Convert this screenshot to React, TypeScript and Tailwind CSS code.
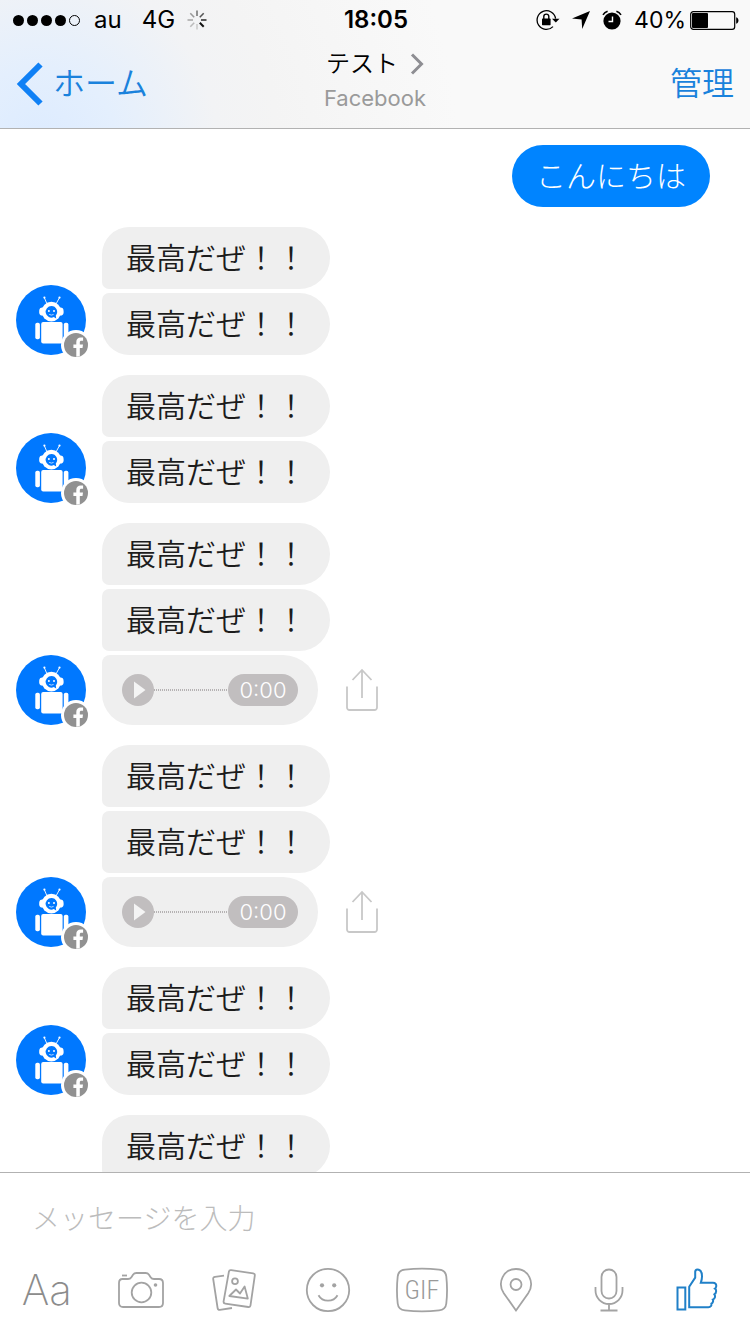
import React from 'react';

type Message = { id: number; kind: 'text'; body: string } | { id: number; kind: 'audio'; duration: string };

const text = (id: number): Message => ({ id, kind: 'text', body: '最高だぜ！！' });
const audio = (id: number): Message => ({ id, kind: 'audio', duration: '0:00' });

const groups: Message[][] = [
  [text(1), text(2)],
  [text(3), text(4)],
  [text(5), text(6), audio(7)],
  [text(8), text(9), audio(10)],
  [text(11), text(12)],
  [text(13), text(14)],
];

const SpinnerIcon = () => (
  <svg width="20" height="20" viewBox="0 0 20 20" strokeWidth="1.6" aria-hidden="true">
    <path d="M10 0.5V6" stroke="#777" />
    <path d="M16.7 3.3L12.8 7.2" stroke="#555" />
    <path d="M19.5 10H14" stroke="#333" />
    <path d="M16.7 16.7L12.8 12.8" stroke="#111" strokeWidth="2" />
    <path d="M10 19.5V14" stroke="#ccc" />
    <path d="M3.3 16.7L7.2 12.8" stroke="#bbb" />
    <path d="M0.5 10H6" stroke="#aaa" />
    <path d="M3.3 3.3L7.2 7.2" stroke="#999" />
  </svg>
);

const RotationLockIcon = () => (
  <svg width="24" height="22" viewBox="0 0 24 22" aria-hidden="true">
    <path d="M19.6 9.6A9.3 9.3 0 1 0 17 17.6" fill="none" stroke="#000" strokeWidth="1.3" />
    <path d="M16 9.8H23.5L19.8 13.6Z" />
    <rect x="6" y="9.6" width="8.6" height="6.6" rx="0.6" />
    <path d="M7.8 10V7.6a2.5 2.5 0 0 1 5 0V10" fill="none" stroke="#000" strokeWidth="1.4" />
  </svg>
);

const LocationIcon = () => (
  <svg width="18" height="18" viewBox="0 0 18 18" aria-hidden="true">
    <path d="M18 0L10.2 18L9.6 8.4L0 7.6Z" />
  </svg>
);

const AlarmIcon = () => (
  <svg width="20" height="20" viewBox="0 0 20 20" aria-hidden="true">
    <circle cx="10" cy="11" r="8.6" />
    <path d="M10.5 6.5V11.5H6.5" fill="none" stroke="#fff" strokeWidth="1.4" />
    <path d="M1 4.8Q2.6 2.2 5.6 1.2M19 4.8Q17.4 2.2 14.4 1.2" fill="none" stroke="#000" strokeWidth="1.6" />
  </svg>
);

const BatteryIcon = () => (
  <svg width="49" height="19" viewBox="0 0 49 19" aria-hidden="true">
    <rect x="0.7" y="0.7" width="44" height="17.6" rx="2.6" fill="none" stroke="#000" strokeWidth="1.2" />
    <rect x="2" y="2" width="16" height="15" rx="1" />
    <path d="M46.2 6.2c3 0.6 3 6 0 6.6Z" />
  </svg>
);

const Avatar = () => (
  <svg className="shrink-0 overflow-visible" width="70" height="70" viewBox="0 0 70 70" role="img" aria-label="Bot">
    <circle cx="35" cy="35" r="35" fill="#0078ff" />
    <g fill="#fff">
      <path d="M31 19L28.4 12.8M40 19L43.4 12.8" stroke="#fff" strokeWidth="0.9" />
      <circle cx="28.4" cy="12.6" r="1.1" />
      <circle cx="43.5" cy="12.6" r="1.1" />
      <circle cx="35.4" cy="26.6" r="9.8" />
      <rect x="23.2" y="22.6" width="24.4" height="8" rx="3.4" />
      <rect x="19.3" y="37.7" width="4.6" height="16.6" rx="1.8" />
      <rect x="25.2" y="37" width="21.4" height="21.4" rx="2" />
      <rect x="47.8" y="37.7" width="4.6" height="16.6" rx="1.8" />
    </g>
    <path d="M35.4 21a5.8 5.8 0 1 0 2.4 11.1l2.4 1.4-.4-3A5.8 5.8 0 0 0 35.4 21Z" fill="#0078ff" />
    <circle cx="32.9" cy="26" r="1" fill="#fff" />
    <circle cx="38" cy="26" r="1" fill="#fff" />
    <path d="M33.2 29.4Q35.4 30.8 37.6 29.4" fill="none" stroke="#fff" strokeWidth="0.7" />
    <circle cx="60" cy="60" r="15" fill="#fff" />
    <circle cx="60" cy="60" r="12" fill="#919191" />
    <path d="M60.3 71.8V63H57.4V59.4H60.3V57c0-3 1.8-4.6 4.4-4.6h2.4v3.3h-1.6c-1.3 0-1.7.6-1.7 1.7v2H67l-.5 3.6h-2.7v8.3Z" fill="#fff" />
  </svg>
);

const ShareIcon = () => (
  <svg width="34" height="44" viewBox="0 0 34 44" fill="none" stroke="#c8c8c8" strokeWidth="1.8" aria-hidden="true">
    <path d="M2 18.5V39.5a2.5 2.5 0 0 0 2.5 2.5h25a2.5 2.5 0 0 0 2.5-2.5V18.5" />
    <path d="M17 30V2M7.5 12L17 2L26.5 12" />
  </svg>
);

const toolIcon = { fill: 'none', stroke: '#a3a3a3', strokeWidth: 1.8, 'aria-hidden': true } as const;

const CameraIcon = () => (
  <svg width="48" height="38" viewBox="0 0 48 38" {...toolIcon}>
    <path d="M5.5 8H11c1.6 0 2.6-.6 3.4-1.8l1.6-2.5C16.9 2.4 18 2 19.4 2h9.2c1.4 0 2.5.4 3.4 1.7l1.6 2.5C34.4 7.4 35.4 8 37 8h5c2.6 0 4 1.6 4 4v20c0 2.6-1.6 4-4 4H6c-2.6 0-4-1.4-4-4V12c0-2.6 1.2-4 3.5-4Z" />
    <path d="M5 4.5h5" />
    <circle cx="24.5" cy="21.5" r="9.8" />
    <circle cx="38.5" cy="14" r="1.8" fill="#a3a3a3" stroke="none" />
  </svg>
);

const PhotosIcon = () => (
  <svg width="46" height="44" viewBox="0 0 46 44" strokeLinejoin="round" {...toolIcon}>
    <path d="M13 7.6L4 8.8c-1.3.2-2 1-1.8 2.2L6.6 40c.2 1.3 1 2 2.2 1.8L21 40" />
    <path d="M20.2 2.2L42.2 5.4c1.2.2 1.8 1 1.6 2.2L39.5 37.4c-.2 1.2-1 1.8-2.2 1.6L14.2 35.6c-1.2-.2-1.8-1-1.6-2.2L17.9 3.7c.2-1.1 1.1-1.7 2.3-1.5Z" />
    <circle cx="24" cy="13.3" r="2.9" />
    <path d="M18.3 28L25 21.5L29 25.5L33.6 18.5L36.8 30.6Z" />
  </svg>
);

const SmileIcon = () => (
  <svg width="46" height="46" viewBox="0 0 46 46" {...toolIcon}>
    <circle cx="23" cy="23" r="21.2" />
    <circle cx="17" cy="18.3" r="2.1" fill="#a3a3a3" stroke="none" />
    <circle cx="29.2" cy="18.3" r="2.1" fill="#a3a3a3" stroke="none" />
    <path d="M13.5 28.2C17.5 35.5 28.5 35.5 32.5 28.2" />
  </svg>
);

const GifIcon = () => (
  <svg width="54" height="46" viewBox="0 0 54 46" {...toolIcon}>
    <path d="M10 2.6Q27 .8 44 2.6Q50.6 3.2 51.3 9.5Q52.8 23 51.3 36.5Q50.6 42.8 44 43.4Q27 45.2 10 43.4Q3.4 42.8 2.7 36.5Q1.2 23 2.7 9.5Q3.4 3.2 10 2.6Z" />
  </svg>
);

const PinIcon = () => (
  <svg width="34" height="46" viewBox="0 0 34 46" {...toolIcon}>
    <path d="M17 43.5L4.8 26.2C-2.2 15.5 4.6 2 17 2S36.2 15.5 29.2 26.2Z" />
    <circle cx="17" cy="17.5" r="5.5" />
  </svg>
);

const MicIcon = () => (
  <svg width="30" height="46" viewBox="0 0 30 46" {...toolIcon}>
    <rect x="7.5" y="2.5" width="15" height="29" rx="7.5" />
    <path d="M1.5 20v3.5a13.5 13.5 0 0 0 27 0V20M15 37v6.5M6.5 43.5h17" />
  </svg>
);

const ThumbIcon = () => (
  <svg width="42" height="44" viewBox="0 0 42 44" fill="none" stroke="#2080c8" strokeWidth="2" aria-hidden="true">
    <path d="M1.5 19.5h7.8v22H1.5Z" />
    <path d="M13.2 39.2V18.8L19.2 9.6V4C19.2 2.4 20 1.5 21.4 1.5C24.6 1.5 26 4.6 26 8.5C26 11.2 25.4 13 24.8 14.8H37C39.2 14.8 40.6 16.2 40.2 18.4C40 19.6 39.6 20.2 39 20.6C40.6 21.6 40.6 25.2 38.4 26.4C39.6 28 39.2 30.6 36.8 31.6C37.6 33 36.8 35 35.4 35.6C35.8 37.8 34.6 39.2 32.4 39.2Z" />
  </svg>
);

const StatusBar = () => (
  <div className="grid h-10 grid-cols-[1fr_auto_1fr] items-center pr-[11px] pl-[13px] text-2xl text-black">
    <div className="flex items-center">
      <span className="flex gap-[3px]" role="img" aria-label="Signal">
        {[1, 2, 3, 4].map((n) => (
          <span key={n} className="size-[11px] rounded-full bg-black" />
        ))}
        <span className="size-[11px] rounded-full border border-black" />
      </span>
      <span className="ml-[14px]">au</span>
      <span className="mr-3 ml-5">4G</span>
      <SpinnerIcon />
    </div>
    <time className="font-semibold">18:05</time>
    <div className="flex items-center justify-end">
      <RotationLockIcon />
      <span className="ml-3"><LocationIcon /></span>
      <span className="ml-3"><AlarmIcon /></span>
      <span className="mr-1 ml-3 text-[23px]">40%</span>
      <BatteryIcon />
    </div>
  </div>
);

const NavBar = () => (
  <nav className="grid h-22 grid-cols-[1fr_auto_1fr] items-center px-4 font-[350] text-[#1a82dc]">
    <a href="#home" className="flex items-center gap-[10px] text-[32px] leading-10">
      <svg width="27" height="44" viewBox="0 0 27 44" fill="none" stroke="#0f80f5" strokeWidth="6" aria-hidden="true">
        <path d="M24.5 2.5L5 22L24.5 41.5" />
      </svg>
      ホーム
    </a>
    <button type="button" className="flex flex-col items-center pb-2">
      <span className="flex items-center gap-3 text-2xl leading-9 text-black">
        テスト
        <svg width="14" height="22" viewBox="0 0 14 22" fill="none" stroke="#8e8e93" strokeWidth="3" aria-hidden="true">
          <path d="M2 1.5L11.5 11L2 20.5" />
        </svg>
      </span>
      <span className="text-[22px] leading-8 font-normal text-[#9a9a9a]">Facebook</span>
    </button>
    <button type="button" className="justify-self-end text-[32px] leading-10">管理</button>
  </nav>
);

const AudioMessage = ({ duration, shape }: { duration: string; shape: string }) => (
  <div className="flex items-center gap-[27px]">
    <div className={`flex h-[70px] w-[216px] items-center bg-[#efefef] px-5 ${shape}`}>
      <button type="button" aria-label="再生" className="flex size-8 items-center justify-center rounded-full bg-[#c1bebf]">
        <svg width="32" height="32" viewBox="0 0 32 32" fill="#f4f4f4" aria-hidden="true">
          <path d="M12 7.5L23.5 16L12 24.5Z" />
        </svg>
      </button>
      <span className="h-[2px] flex-1 bg-[repeating-linear-gradient(90deg,#b5b2b3_0_1px,transparent_1px_2px)]" />
      <span className="flex h-8 w-[70px] items-center justify-center rounded-full bg-[#c1bebf] text-[22px] font-light text-white">
        {duration}
      </span>
    </div>
    <button type="button" aria-label="共有"><ShareIcon /></button>
  </div>
);

const MessageGroup = ({ messages }: { messages: Message[] }) => (
  <li className="flex items-end gap-4">
    <Avatar />
    <div className="flex flex-col items-start gap-1">
      {messages.map((m, i) => {
        const top = i === 0 ? 'rounded-tl-[31px]' : 'rounded-tl-lg';
        const bottom = i === messages.length - 1 ? 'rounded-bl-[31px]' : 'rounded-bl-lg';
        const shape = `rounded-r-[35px] ${top} ${bottom}`;
        return m.kind === 'audio' ? (
          <AudioMessage key={m.id} duration={m.duration} shape={shape} />
        ) : (
          <p key={m.id} className={`bg-[#efefef] px-6 py-4 text-3xl leading-[30px] font-[350] text-[#1c1c1c] ${shape}`}>
            {m.body}
          </p>
        );
      })}
    </div>
  </li>
);

const Composer = () => (
  <footer className="shrink-0 border-t border-[#b2b2b2] bg-white pb-[15px]">
    <input
      type="text"
      aria-label="メッセージ"
      placeholder="メッセージを入力"
      className="block w-full px-8 py-5 font-['Noto_Sans_CJK_JP',sans-serif] text-[28px] leading-[48px] font-light text-black outline-none placeholder:text-[#bcbcbc]"
    />
    <div className="grid h-[58px] grid-cols-8 *:flex *:items-center *:justify-center">
      <button type="button" className="text-[42px] leading-none font-extralight text-[#8c8c8c]">Aa</button>
      <button type="button" aria-label="カメラ"><CameraIcon /></button>
      <button type="button" aria-label="写真"><PhotosIcon /></button>
      <button type="button" aria-label="スタンプ"><SmileIcon /></button>
      <button type="button" className="relative">
        <GifIcon />
        <span className="absolute inset-0 flex items-center justify-center font-['Roboto_Condensed','Liberation_Sans_Narrow',Roboto,sans-serif] text-[26px] font-light text-[#999]">
          GIF
        </span>
      </button>
      <button type="button" aria-label="位置情報"><PinIcon /></button>
      <button type="button" aria-label="マイク"><MicIcon /></button>
      <button type="button" aria-label="いいね" className="pr-3"><ThumbIcon /></button>
    </div>
  </footer>
);

export default function App() {
  return (
    <div className="flex h-screen flex-col bg-white font-[Inter,'Noto_Sans_CJK_JP',sans-serif]">
      <header className="shrink-0 border-b border-[#b2b2b2] bg-[#f9f9f9] bg-[radial-gradient(circle_at_5%_115%,#dcebff_0,#e4effd_80px,#f2f3f5_180px,#f4f4f4_240px,#f9f9f9_420px)]">
        <StatusBar />
        <NavBar />
      </header>
      <main className="min-h-0 flex-1 overflow-y-auto px-4 pt-4 [scrollbar-width:none]">
        <ul className="flex flex-col gap-5">
          <li className="mr-6 self-end rounded-full bg-[#0084ff] px-6 py-4 text-3xl leading-[30px] font-light text-white">
            こんにちは
          </li>
          {groups.map((messages) => (
            <MessageGroup key={messages[0].id} messages={messages} />
          ))}
        </ul>
      </main>
      <Composer />
    </div>
  );
}
